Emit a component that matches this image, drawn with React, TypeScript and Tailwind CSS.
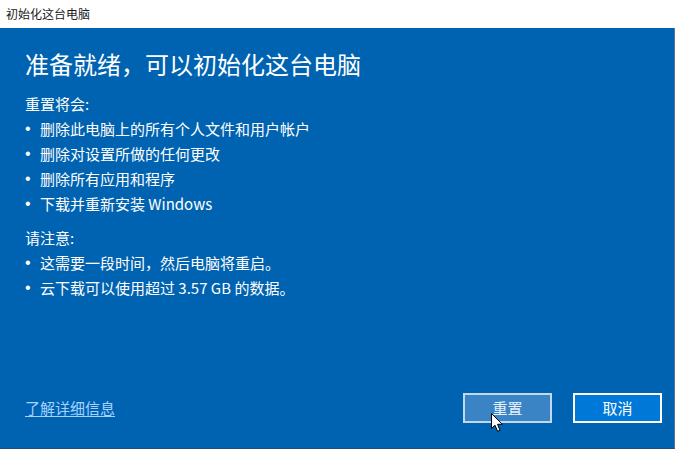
const cjk = { fontFamily: '"Microsoft YaHei", "Noto Sans CJK SC", "Noto Sans", sans-serif' };

const notes = {
  reset: [
    "删除此电脑上的所有个人文件和用户帐户",
    "删除对设置所做的任何更改",
    "删除所有应用和程序",
    "下载并重新安装 Windows",
  ],
  attention: ["这需要一段时间，然后电脑将重启。", "云下载可以使用超过 3.57 GB 的数据。"],
};

function Bullets({ items }: { items: string[] }) {
  return (
    <ul className="flex flex-col">
      {items.map((item) => (
        <li key={item} className="flex h-[25px] items-center text-[15px] leading-[25px] text-white">
          <span className="w-[15px] font-['Liberation_Sans',sans-serif] text-[16px]">•</span>
          {item}
        </li>
      ))}
    </ul>
  );
}

export default function App() {
  return (
    <div className="flex h-[449px] w-[675px] flex-col overflow-hidden" style={cjk}>
      <div className="flex h-[28px] items-center bg-white pl-[6px] text-[12px] text-[#1a1a1a]">
        初始化这台电脑
      </div>

      <div className="relative flex flex-1 flex-col border-r border-b border-r-[#5a7593] border-b-[#1d4c7c] bg-[#0063b1] pl-[25px] pr-[12px] pt-[20px] pb-[25px]">
        <h1 className="h-[32px] text-[24px] leading-[32px] text-white">准备就绪，可以初始化这台电脑</h1>

        <div className="mt-[11px] text-[15px] leading-[25px] text-white">重置将会:</div>
        <Bullets items={notes.reset} />

        <div className="mt-[9px] text-[15px] leading-[25px] text-white">请注意:</div>
        <Bullets items={notes.attention} />

        <div className="mt-auto flex items-center">
          <a className="text-[15px] text-[#a6d2ff] underline underline-offset-2">了解详细信息</a>
          <div className="ml-auto flex gap-[21px]">
            <button className="h-[30px] w-[89px] border-2 border-[#c4d8ec] bg-[#3a84c6] text-[15px] text-[#eaf2fa]">
              重置
            </button>
            <button className="h-[30px] w-[89px] border-2 border-white bg-[#0078d7] text-[15px] text-white">
              取消
            </button>
          </div>
        </div>

        <svg
          className="absolute left-[491px] top-[385px]"
          width="13"
          height="20"
          viewBox="0 0 13 20"
        >
          <path
            d="M0.5 0.5 L0.5 15.5 L4 12.2 L6.6 18.3 L9 17.3 L6.5 11.3 L11.3 11.3 Z"
            fill="white"
            stroke="black"
            strokeWidth="1"
            strokeLinejoin="round"
          />
        </svg>
      </div>
    </div>
  );
}
